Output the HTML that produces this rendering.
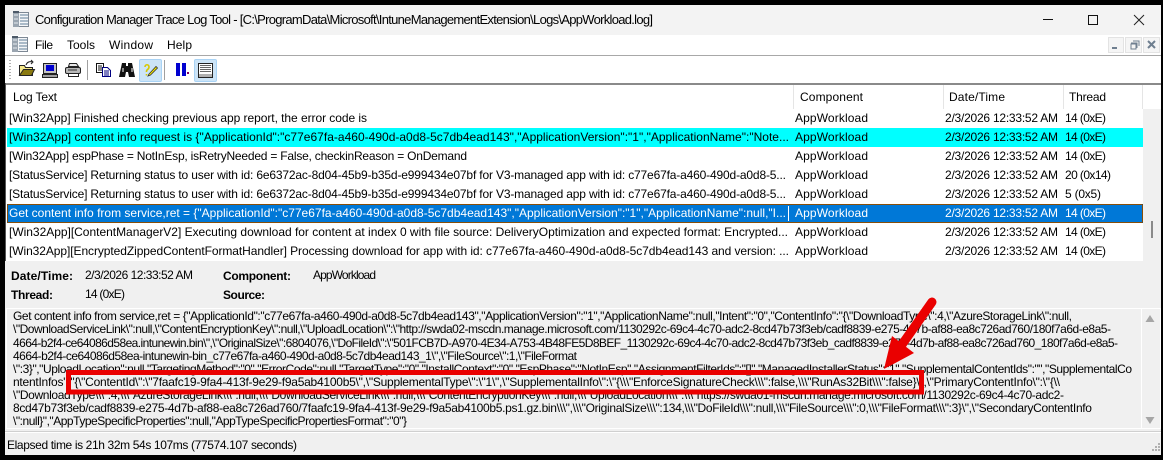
<!DOCTYPE html>
<html><head><meta charset="utf-8"><title>Configuration Manager Trace Log Tool</title>
<style>
html,body{margin:0;padding:0;background:#000;width:1167px;height:460px;overflow:hidden}
svg{display:block}
text{font-family:"Liberation Sans",sans-serif;font-size:12px;fill:#000;white-space:pre}
.b{font-weight:bold}
.w{fill:#fff}
</style></head><body>
<svg width="1167" height="460" viewBox="0 0 1167 460" xmlns="http://www.w3.org/2000/svg" xml:space="preserve">
<rect width="1167" height="460" fill="#000"/>
<rect x="1163" y="0" width="4" height="460" fill="#fff"/>
<rect x="5" y="5" width="1156" height="450" fill="#f0f0f0"/>
<!-- title bar -->
<rect x="5" y="5" width="1156" height="30" fill="#f3f3f3"/>
<g id="ico">
<rect x="13.500" y="12.500" width="15" height="14" fill="#f4f6f8" stroke="#7d8894"/>
<rect x="13" y="12" width="6" height="15" fill="#9aa5b0"/>
<rect x="13" y="11" width="6" height="2" fill="#4d5a68"/>
<path d="M20 15h8M20 18h8M20 21h8M20 24h8" stroke="#5f7f98"/>
<path d="M14 15h4M14 19h4M14 23h4" stroke="#e6ebf0"/>
</g>
<text x="35" y="24" textLength="618" lengthAdjust="spacing" style="font-size:13px">Configuration Manager Trace Log Tool - [C:\ProgramData\Microsoft\IntuneManagementExtension\Logs\AppWorkload.log]</text>
<path d="M1043 19.5h10" stroke="#111"/>
<rect x="1088.5" y="15.5" width="9" height="9" fill="none" stroke="#111"/>
<path d="M1134 15l10 10M1144 15l-10 10" stroke="#222"/>
<!-- menu -->
<rect x="5" y="35" width="1156" height="20" fill="#fff"/>
<use href="#ico" transform="translate(-1,25)"/>
<text x="35" y="49" textLength="18" lengthAdjust="spacing">File</text>
<text x="67" y="49" textLength="28" lengthAdjust="spacing">Tools</text>
<text x="109" y="49" textLength="44" lengthAdjust="spacing">Window</text>
<text x="167" y="49" textLength="25" lengthAdjust="spacing">Help</text>
<rect x="1108.5" y="37.5" width="15" height="15" fill="#f5f5f5" stroke="#e3e3e3"/>
<rect x="1125.5" y="37.5" width="16" height="15" fill="#f5f5f5" stroke="#e3e3e3"/>
<rect x="1143.5" y="37.5" width="16" height="15" fill="#f5f5f5" stroke="#e3e3e3"/>
<path d="M1112 48h5" stroke="#6f7f90" stroke-width="2"/>
<path d="M1131 43h6v5M1133 41h6v5M1131 44v5h5v-5z" fill="none" stroke="#6f7f90"/>
<path d="M1148 41l7 7M1155 41l-7 7" stroke="#6f7f90" stroke-width="2"/>
<!-- toolbar -->
<rect x="5" y="55" width="1156" height="1" fill="#a8a8a8"/>
<rect x="5" y="56" width="1156" height="27" fill="#fff"/>
<path d="M10 60v1M10 63v1M10 66v1M10 69v1M10 72v1M10 75v1M10 78v1" stroke="#b0b0b0" stroke-width="2"/>
<!-- folder -->
<path d="M19.5 65.5h5l1 2h7v8h-13z" fill="#f5e88a" stroke="#222"/>
<path d="M19.5 75.5l4-6h11l-3 6z" fill="#8a7a10" stroke="#222"/>
<path d="M26 65c1-3 4-4 6-3M31 60l2 2-2 2" fill="none" stroke="#222"/>
<!-- computer -->
<rect x="43.5" y="63.5" width="13" height="10" fill="#c4c4c4" stroke="#222"/>
<rect x="46" y="65" width="8" height="6" fill="#0000d0"/>
<rect x="42.5" y="74.5" width="15" height="3" fill="#a0a0a0" stroke="#222"/>
<!-- printer -->
<path d="M69.5 63.5h7l2 3h-10z" fill="#e8e8e8" stroke="#222"/>
<rect x="65.5" y="67.5" width="15" height="6" rx="1.5" fill="#b8b8b8" stroke="#222"/>
<rect x="68.5" y="73.5" width="10" height="3" fill="#fff" stroke="#222"/>
<path d="M68 70h9" stroke="#333"/>
<rect x="87" y="60" width="1" height="20" fill="#a0a0a0"/>
<!-- copy -->
<path d="M96.5 63.5h7v9h-7z" fill="#fff" stroke="#111"/>
<path d="M98 66h4M98 68h4M98 70h4" stroke="#111"/>
<path d="M102.5 67.5h5l3 3v6h-8z" fill="#fff" stroke="#000080"/>
<path d="M104 71h5M104 73h5M104 75h5" stroke="#000080"/>
<!-- binoculars -->
<path d="M122 63h4v3h2v-3h4l3 14h-6l-1-5h-2l-1 5h-6z" fill="#111"/>
<path d="M123 68v4M132 68v4" stroke="#fff"/>
<!-- highlight btn -->
<rect x="139.5" y="59.5" width="22" height="22" rx="1.5" fill="#cce4f7" stroke="#a9d3f5"/>
<path d="M145 67c0-3 4-3 4 0s-3 2-2.500 5M146.500 74v1.500" fill="none" stroke="#d8c800" stroke-width="1.600"/>
<path d="M149 74l7-7.500 1.500 1.500-7 7-2.500 1z" fill="#f5e800" stroke="#333" stroke-width=".8"/>
<rect x="164" y="60" width="1" height="20" fill="#a0a0a0"/>
<!-- pause -->
<rect x="176" y="63" width="4" height="13" fill="#0000d0"/><rect x="182" y="63" width="4" height="13" fill="#0000d0"/>
<rect x="187" y="72" width="2" height="2" fill="#800060"/>
<!-- window btn -->
<rect x="194.5" y="59.500" width="22" height="22" rx="1.5" fill="#cce4f7" stroke="#a9d3f5"/>
<rect x="198.500" y="63.500" width="14" height="14" fill="#fff" stroke="#222"/>
<path d="M200 65.500h11M200 67.500h11M200 69.500h11M200 71.500h11" stroke="#666"/>
<rect x="199" y="74" width="13" height="3" fill="#b0b0b0"/>
<!-- list -->
<rect x="5" y="83" width="1156" height="2" fill="#8a8a8a"/>
<rect x="5" y="85" width="1156" height="176" fill="#f0f0f0"/>
<rect x="6" y="85" width="1155" height="24" fill="#fff"/>
<rect x="6" y="109" width="1137" height="152" fill="#fff"/>
<rect x="5" y="83" width="1" height="178" fill="#555"/>
<rect x="793" y="85" width="1" height="24" fill="#e5e5e5"/>
<rect x="943" y="85" width="1" height="24" fill="#e5e5e5"/>
<rect x="1063" y="85" width="1" height="24" fill="#e5e5e5"/>
<rect x="1142" y="85" width="1" height="24" fill="#e5e5e5"/>
<text x="13" y="101" textLength="44" lengthAdjust="spacing">Log Text</text>
<text x="800" y="101" textLength="63" lengthAdjust="spacing">Component</text>
<text x="949" y="101" textLength="56" lengthAdjust="spacing">Date/Time</text>
<text x="1069" y="101" textLength="37" lengthAdjust="spacing">Thread</text>
<rect x="7" y="128" width="1136" height="19" fill="#00ffff"/>
<rect x="7" y="204" width="1136" height="19" fill="#0078d7"/>
<rect x="7.500" y="204.500" width="1135" height="18" fill="none" stroke="#ff8c00" stroke-dasharray="1 1"/>
<rect x="7.500" y="204.500" width="1135" height="18" fill="none" stroke="#111" stroke-dasharray="1 1" stroke-dashoffset="1"/>
<rect x="1151" y="221" width="2" height="17" fill="#8a8a8a"/>
<text x="9" y="122" textLength="358" lengthAdjust="spacing">[Win32App] Finished checking previous app report, the error code is</text>
<text x="9" y="141" textLength="780" lengthAdjust="spacing">[Win32App] content info request is {"ApplicationId":"c77e67fa-a460-490d-a0d8-5c7db4ead143","ApplicationVersion":"1","ApplicationName":"Note...</text>
<text x="9" y="160" textLength="458" lengthAdjust="spacing">[Win32App] espPhase = NotInEsp, isRetryNeeded = False, checkinReason = OnDemand</text>
<text x="9" y="179" textLength="777" lengthAdjust="spacing">[StatusService] Returning status to user with id: 6e6372ac-8d04-45b9-b35d-e999434e07bf for V3-managed app with id: c77e67fa-a460-490d-a0d8-5...</text>
<text x="9" y="198" textLength="777" lengthAdjust="spacing">[StatusService] Returning status to user with id: 6e6372ac-8d04-45b9-b35d-e999434e07bf for V3-managed app with id: c77e67fa-a460-490d-a0d8-5...</text>
<text x="9" y="217" textLength="777" lengthAdjust="spacing" class="w">Get content info from service,ret = {"ApplicationId":"c77e67fa-a460-490d-a0d8-5c7db4ead143","ApplicationVersion":"1","ApplicationName":null,"I...</text>
<rect x="788" y="206" width="1" height="15" fill="#fff"/>
<text x="9" y="236" textLength="779" lengthAdjust="spacing">[Win32App][ContentManagerV2] Executing download for content at index 0 with file source: DeliveryOptimization and expected format: Encrypted...</text>
<text x="9" y="255" textLength="780" lengthAdjust="spacing">[Win32App][EncryptedZippedContentFormatHandler] Processing download for app with id: c77e67fa-a460-490d-a0d8-5c7db4ead143 and version: ...</text>
<!-- other columns -->
<g>
<text x="795" y="122" textLength="73" lengthAdjust="spacing">AppWorkload</text>
<text x="945" y="122" textLength="113" lengthAdjust="spacing">2/3/2026 12:33:52 AM</text>
<text x="1065" y="122" textLength="41" lengthAdjust="spacing">14 (0xE)</text>
<text x="795" y="141" textLength="73" lengthAdjust="spacing">AppWorkload</text>
<text x="945" y="141" textLength="113" lengthAdjust="spacing">2/3/2026 12:33:52 AM</text>
<text x="1065" y="141" textLength="41" lengthAdjust="spacing">14 (0xE)</text>
<text x="795" y="160" textLength="73" lengthAdjust="spacing">AppWorkload</text>
<text x="945" y="160" textLength="113" lengthAdjust="spacing">2/3/2026 12:33:52 AM</text>
<text x="1065" y="160" textLength="41" lengthAdjust="spacing">14 (0xE)</text>
<text x="795" y="179" textLength="73" lengthAdjust="spacing">AppWorkload</text>
<text x="945" y="179" textLength="113" lengthAdjust="spacing">2/3/2026 12:33:52 AM</text>
<text x="1065" y="179" textLength="46" lengthAdjust="spacing">20 (0x14)</text>
<text x="795" y="198" textLength="73" lengthAdjust="spacing">AppWorkload</text>
<text x="945" y="198" textLength="113" lengthAdjust="spacing">2/3/2026 12:33:52 AM</text>
<text x="1065" y="198" textLength="36" lengthAdjust="spacing">5 (0x5)</text>
<text x="795" y="217" textLength="73" lengthAdjust="spacing" class="w">AppWorkload</text>
<text x="945" y="217" textLength="113" lengthAdjust="spacing" class="w">2/3/2026 12:33:52 AM</text>
<text x="1065" y="217" textLength="41" lengthAdjust="spacing" class="w">14 (0xE)</text>
<text x="795" y="236" textLength="73" lengthAdjust="spacing">AppWorkload</text>
<text x="945" y="236" textLength="113" lengthAdjust="spacing">2/3/2026 12:33:52 AM</text>
<text x="1065" y="236" textLength="41" lengthAdjust="spacing">14 (0xE)</text>
<text x="795" y="255" textLength="73" lengthAdjust="spacing">AppWorkload</text>
<text x="945" y="255" textLength="113" lengthAdjust="spacing">2/3/2026 12:33:52 AM</text>
<text x="1065" y="255" textLength="41" lengthAdjust="spacing">14 (0xE)</text>
</g>
<!-- details -->
<text x="11" y="280" textLength="62" lengthAdjust="spacing" class="b">Date/Time:</text>
<text x="85" y="279" textLength="108" lengthAdjust="spacing">2/3/2026 12:33:52 AM</text>
<text x="223" y="280" textLength="68" lengthAdjust="spacing" class="b">Component:</text>
<text x="313" y="279" textLength="63" lengthAdjust="spacing">AppWorkload</text>
<text x="11" y="299" textLength="42" lengthAdjust="spacing" class="b">Thread:</text>
<text x="85" y="298" textLength="40" lengthAdjust="spacing">14 (0xE)</text>
<text x="223" y="299" textLength="42" lengthAdjust="spacing" class="b">Source:</text>
<!-- text area -->
<rect x="6.500" y="308.500" width="1154" height="120" fill="#f0f0f0" stroke="#fff"/>
<rect x="1141" y="309" width="1" height="119" fill="#fff"/>
<path d="M1150 315l-4.500 7h9z" fill="#a6a6a6"/>
<path d="M1150 424l-4.500-7h9z" fill="#a6a6a6"/>
<text x="13" y="320" textLength="1059" lengthAdjust="spacing">Get content info from service,ret = {"ApplicationId":"c77e67fa-a460-490d-a0d8-5c7db4ead143","ApplicationVersion":"1","ApplicationName":null,"Intent":"0","ContentInfo":"{\"DownloadType\":4,\"AzureStorageLink\":null,</text>
<text x="13" y="333" textLength="1098" lengthAdjust="spacing">\"DownloadServiceLink\":null,\"ContentEncryptionKey\":null,\"UploadLocation\":\"http://swda02-mscdn.manage.microsoft.com/1130292c-69c4-4c70-adc2-8cd47b73f3eb/cadf8839-e275-4d7b-af88-ea8c726ad760/180f7a6d-e8a5-</text>
<text x="13" y="347" textLength="1105" lengthAdjust="spacing">4664-b2f4-ce64086d58ea.intunewin.bin\",\"OriginalSize\":6804076,\"DoFileId\":\"501FCB7D-A970-4E34-A753-4B48FE5D8BEF_1130292c-69c4-4c70-adc2-8cd47b73f3eb_cadf8839-e275-4d7b-af88-ea8c726ad760_180f7a6d-e8a5-</text>
<text x="13" y="360" textLength="564" lengthAdjust="spacing">4664-b2f4-ce64086d58ea-intunewin-bin_c77e67fa-a460-490d-a0d8-5c7db4ead143_1\",\"FileSource\":1,\"FileFormat</text>
<text x="13" y="373" textLength="1119" lengthAdjust="spacing">\":3}","UploadLocation":null,"TargetingMethod":"0","ErrorCode":null,"TargetType":"0","InstallContext":"0","EspPhase":"NotInEsp","AssignmentFilterIds":"[]","ManagedInstallerStatus":"1","SupplementalContentIds":"","SupplementalCo</text>
<text x="13" y="386" textLength="1047" lengthAdjust="spacing">ntentInfos":"{\"ContentId\":\"7faafc19-9fa4-413f-9e29-f9a5ab4100b5\",\"SupplementalType\":\"1\",\"SupplementalInfo\":\"{\\\"EnforceSignatureCheck\\\":false,\\\"RunAs32Bit\\\":false}\",\"PrimaryContentInfo\":\"{\\</text>
<text x="13" y="399" textLength="1051" lengthAdjust="spacing">\"DownloadType\\\":4,\\\"AzureStorageLink\\\":null,\\\"DownloadServiceLink\\\":null,\\\"ContentEncryptionKey\\\":null,\\\"UploadLocation\\\":\\\"https://swda01-mscdn.manage.microsoft.com/1130292c-69c4-4c70-adc2-</text>
<text x="13" y="412" textLength="1079" lengthAdjust="spacing">8cd47b73f3eb/cadf8839-e275-4d7b-af88-ea8c726ad760/7faafc19-9fa4-413f-9e29-f9a5ab4100b5.ps1.gz.bin\\\",\\\"OriginalSize\\\":134,\\\"DoFileId\\\":null,\\\"FileSource\\\":0,\\\"FileFormat\\\":3}\",\"SecondaryContentInfo</text>
<text x="13" y="425" textLength="394" lengthAdjust="spacing">\":null}","AppTypeSpecificProperties":null,"AppTypeSpecificPropertiesFormat":"0"}</text>
<!-- red box + arrow -->
<rect x="68.500" y="372.500" width="853" height="19.500" fill="none" stroke="#ea0000" stroke-width="5"/>
<path d="M932 302L901 346" stroke="#ea0000" stroke-width="9" stroke-linecap="round" fill="none"/>
<path d="M884 369L892 336L914 353z" fill="#ea0000"/>
<!-- status bar -->
<rect x="5" y="431" width="1156" height="1" fill="#d0d0d0"/>
<rect x="5" y="432" width="1156" height="1" fill="#fff"/>
<text x="7" y="449" textLength="290" lengthAdjust="spacing">Elapsed time is 21h 32m 54s 107ms (77574.107 seconds)</text>
<path d="M1158 444h2M1155 447h2M1158 447h2M1152 450h2M1155 450h2M1158 450h2" stroke="#b0b0b0" stroke-width="2"/>
</svg>
</body></html>
